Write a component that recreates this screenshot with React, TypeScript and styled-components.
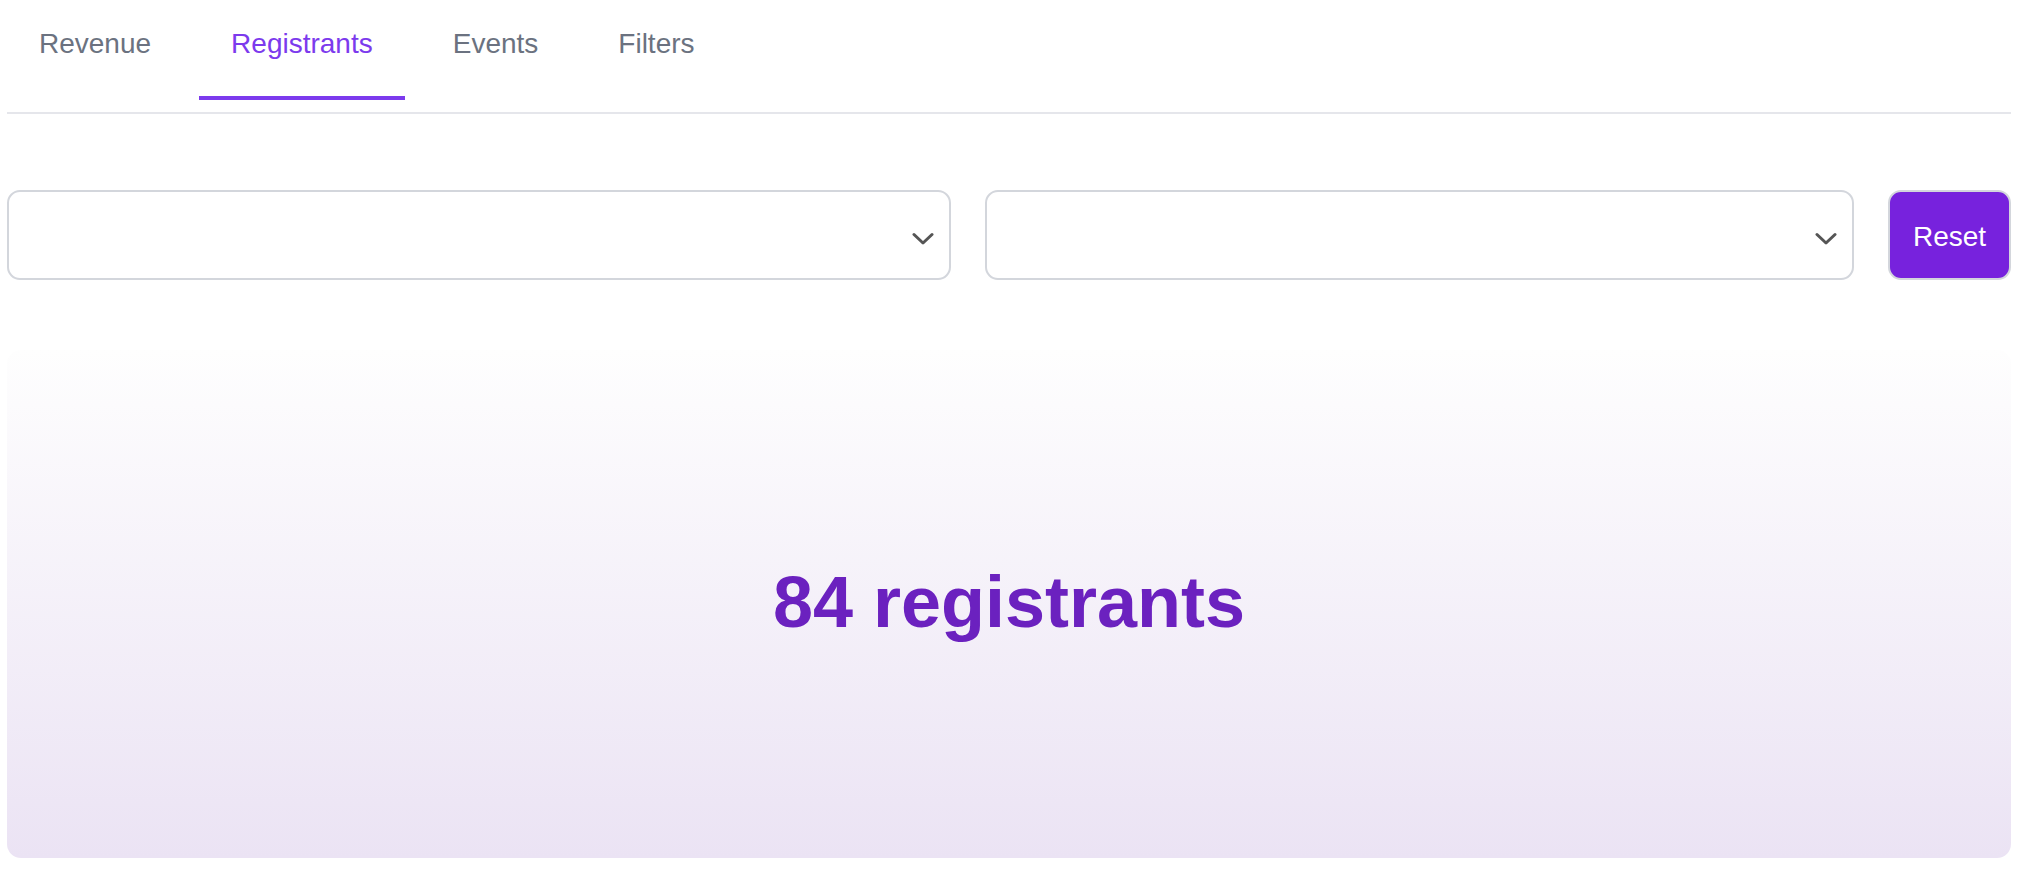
import React, { useState } from "react";
import styled, { createGlobalStyle } from "styled-components";

const GlobalStyle = createGlobalStyle`
  html, body {
    margin: 0;
    padding: 0;
    background: #ffffff;
    font-family: "Liberation Sans", Arial, Helvetica, sans-serif;
  }
  * { box-sizing: border-box; }
`;

const Page = styled.div`
  padding: 0 15px 0 7px;
  height: 880px;
  display: flex;
  flex-direction: column;
`;

const TabBar = styled.nav`
  display: flex;
  gap: 16px;
  padding-bottom: 12px;
  border-bottom: 2px solid #e5e6eb;
`;

const Tab = styled.button<{ $active?: boolean }>`
  appearance: none;
  background: none;
  border: none;
  border-bottom: 4px solid ${(p) => (p.$active ? "#7c3aed" : "transparent")};
  padding: 28px 32px 36px;
  margin: 0;
  font-family: inherit;
  font-size: 28px;
  line-height: 32px;
  color: ${(p) => (p.$active ? "#7c3aed" : "#6b7280")};
  cursor: pointer;
`;

const FilterRow = styled.div`
  margin-top: 76px;
  display: grid;
  grid-template-columns: 944fr 869fr 123px;
  gap: 34px;
  height: 90px;
`;

const SelectBox = styled.div`
  border: 2px solid #d3d6dc;
  border-radius: 13px;
  background: #ffffff;
  display: flex;
  align-items: center;
  justify-content: flex-end;
  padding-right: 15px;
`;

const Chevron = styled.svg`
  margin-top: 7px;
`;

const ResetButton = styled.button`
  appearance: none;
  border: 2px solid #d3d6dc;
  border-radius: 13px;
  background: #7722dd;
  color: #ffffff;
  font-family: inherit;
  font-size: 28px;
  padding: 4px 0 0;
  cursor: pointer;
`;

const Card = styled.section`
  margin-top: 70px;
  height: 508px;
  border-radius: 14px;
  background: linear-gradient(180deg, #fefefe 0%, #ebe3f4 100%);
  display: flex;
  align-items: center;
  justify-content: center;
`;

const Count = styled.h2`
  margin: 0;
  font-size: 72px;
  font-weight: 700;
  color: #6b21bf;
  margin-top: -4px;
`;

const ChevronIcon = () => (
  <Chevron width="22" height="14" viewBox="0 0 22 14" fill="none">
    <path d="M2 2.5 L11 11 L20 2.5" stroke="#555555" strokeWidth="3" strokeLinecap="round" strokeLinejoin="round" />
  </Chevron>
);

const tabs = ["Revenue", "Registrants", "Events", "Filters"];

export default function App() {
  const [active, setActive] = useState("Registrants");
  return (
    <>
      <GlobalStyle />
      <Page>
        <TabBar>
          {tabs.map((t) => (
            <Tab key={t} $active={t === active} onClick={() => setActive(t)}>
              {t}
            </Tab>
          ))}
        </TabBar>
        <FilterRow>
          <SelectBox>
            <ChevronIcon />
          </SelectBox>
          <SelectBox>
            <ChevronIcon />
          </SelectBox>
          <ResetButton>Reset</ResetButton>
        </FilterRow>
        <Card>
          <Count>84 registrants</Count>
        </Card>
      </Page>
    </>
  );
}
